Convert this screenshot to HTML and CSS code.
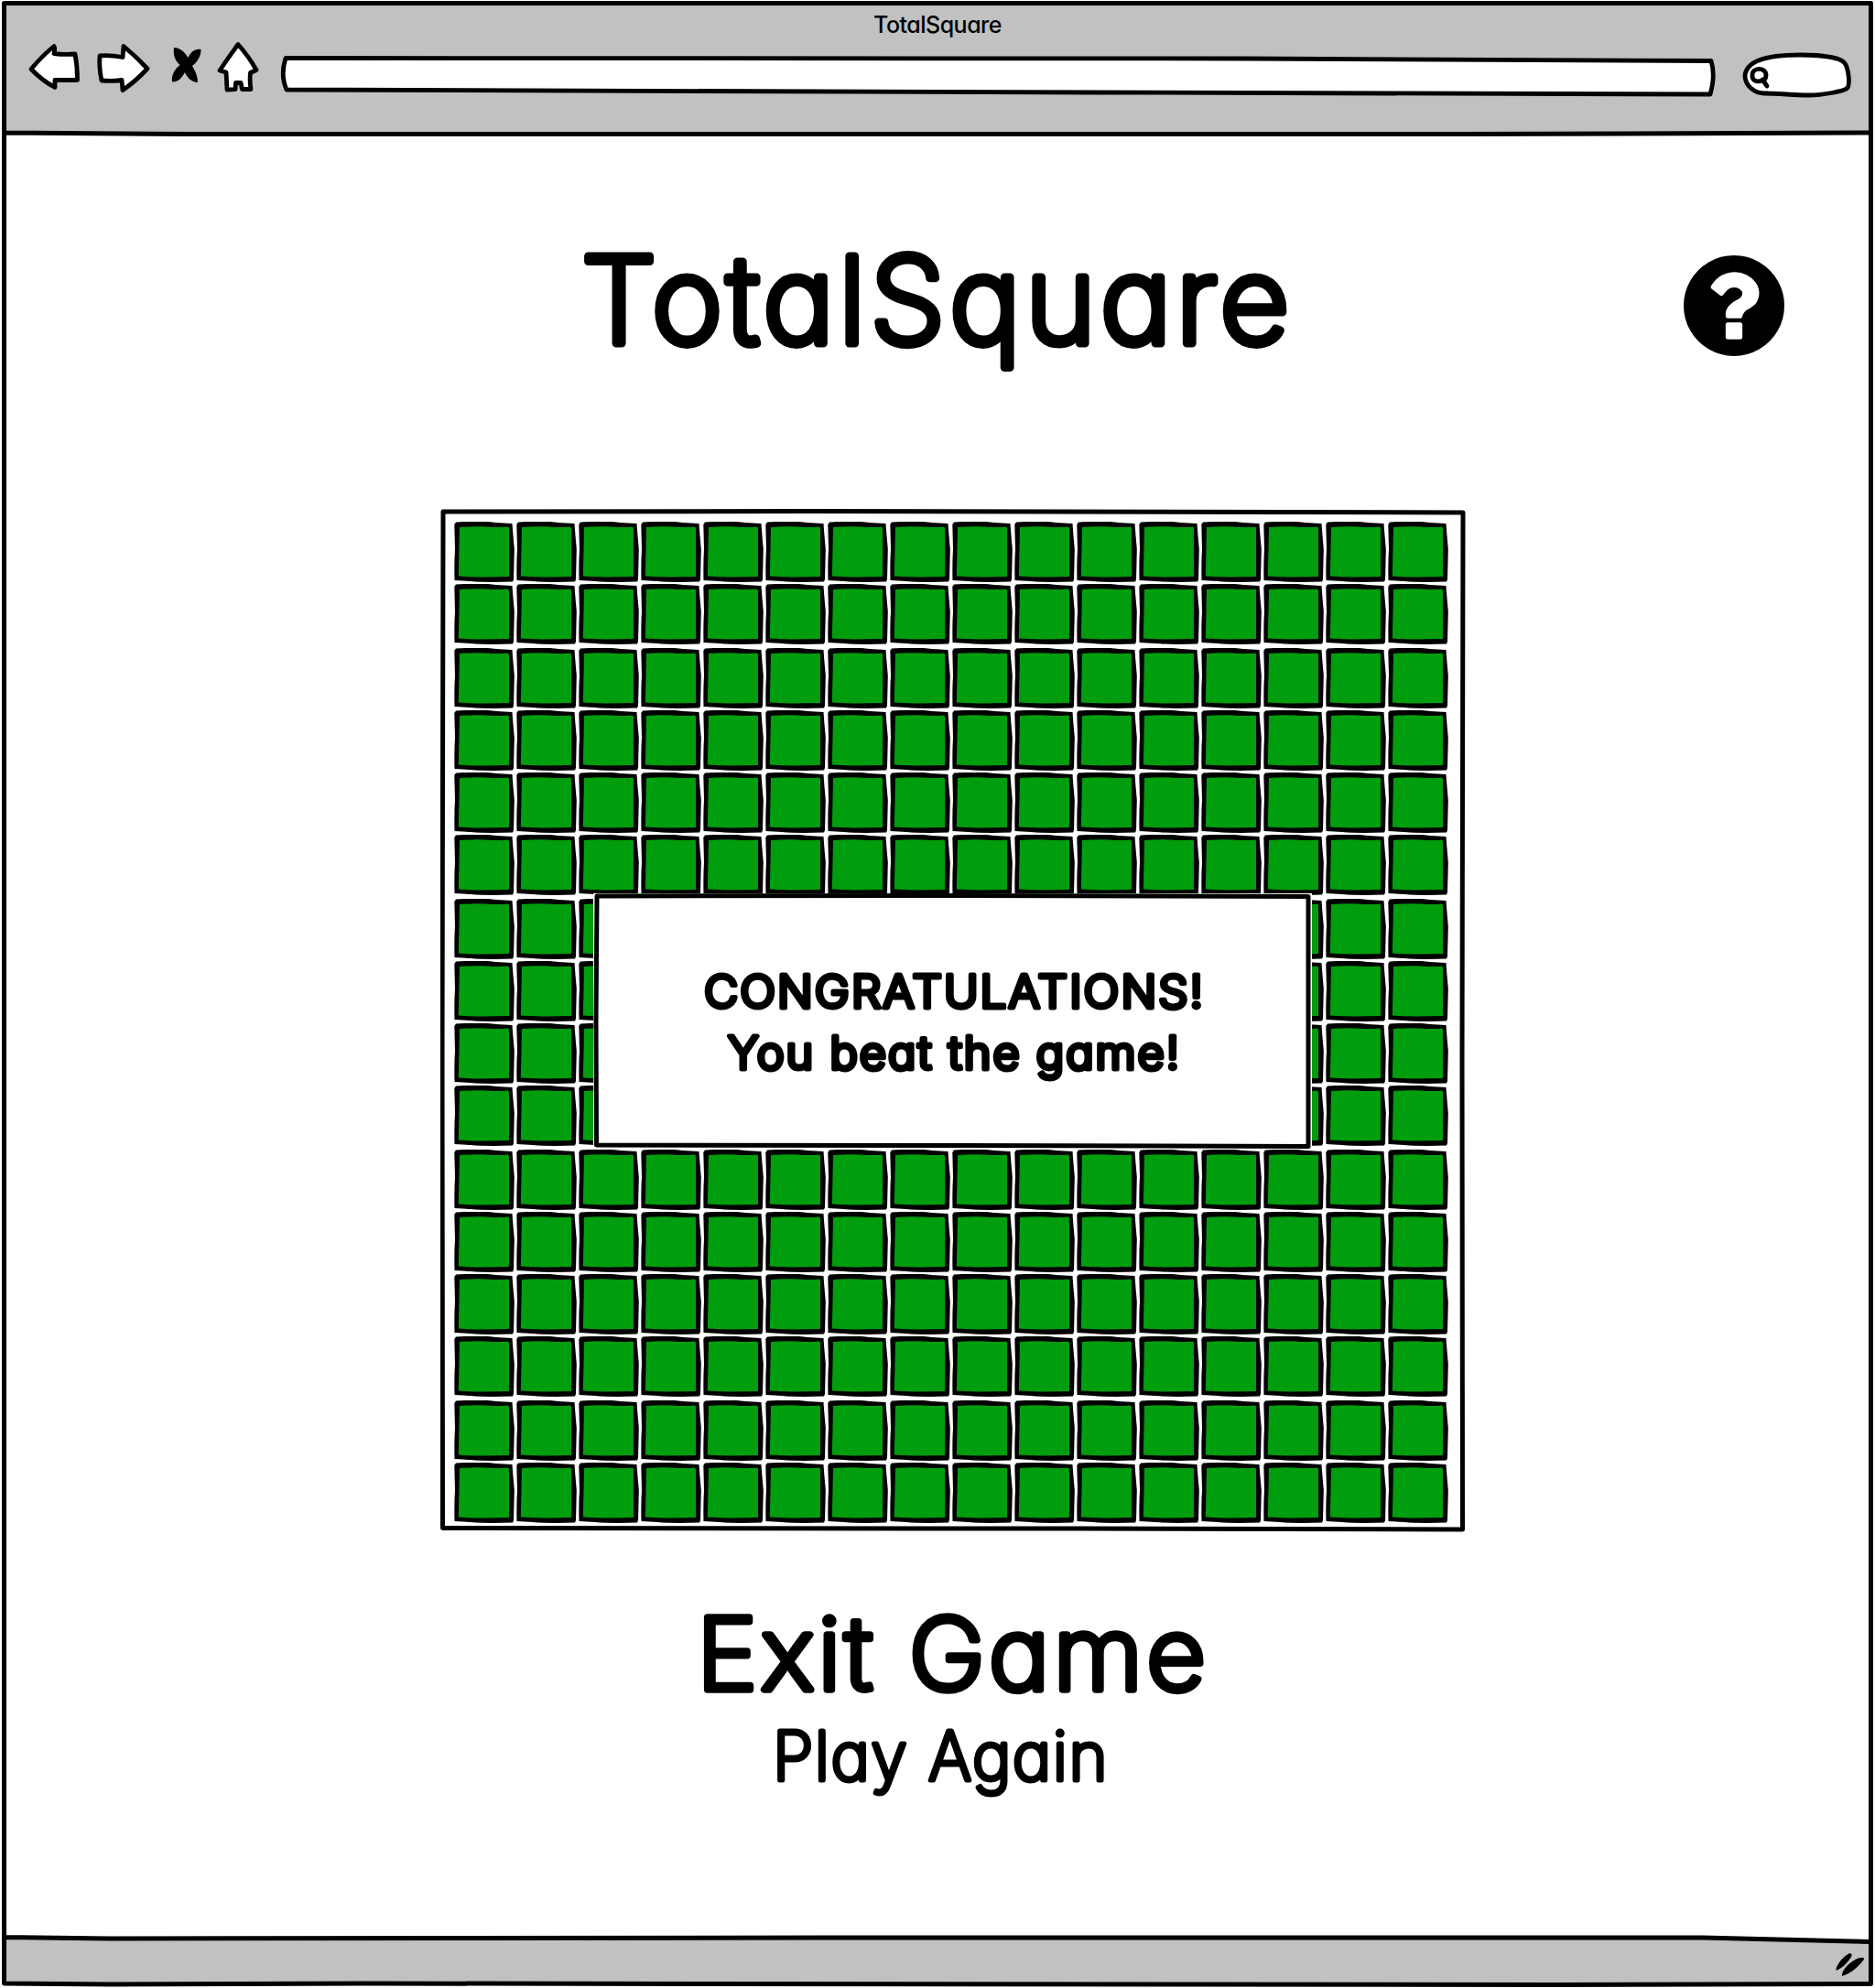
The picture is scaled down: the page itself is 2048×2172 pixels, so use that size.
FILE: index.html
```html
<!DOCTYPE html>
<html lang="en">
<head>
<meta charset="utf-8">
<title>TotalSquare</title>
<link rel="stylesheet" href="styles.css">
</head>
<body>
<div class="window">
  <header class="toolbar">
    <div class="window-title">TotalSquare</div>
    <nav class="controls">
      <svg class="ink icon-back" viewBox="28 44 62 60"><path d="M34 75.500 Q46 61 59 50.500 Q60.500 53 59 58.500 Q70 60 82 59 Q84.500 72 84.500 87.500 L60 87.500 L60 95.500 Q46 88 34 75.500Z"/></svg>
      <svg class="ink icon-forward" viewBox="102 44 66 60"><path d="M109 61 Q120 60 134 62.500 L135 50.500 Q149 62 161 75 Q148 89 134 98.500 L133 87.500 Q122 89 111 88 Q108 74 109 61Z"/></svg>
      <svg class="solid icon-stop" viewBox="184 48 40 46"><path d="M190 52 C198 52 203 59 205.500 63 C208 57 213 53 219.500 54 C219.500 62 215 68 210 72 C213 77 216 83 216 90 C209 90 204 84 202 79 C199 85 194 90 188 89.500 C187 82 191 75 196.500 71 C191 66 189 60 190 52Z"/></svg>
      <svg class="ink icon-home" viewBox="234 42 52 62"><path d="M260 48.500 Q272 62 280 76.500 L273.500 79.500 Q272.500 88 274 97.500 L264.500 97.500 L263 90.500 L257.500 90.500 L257 97.500 L248 98 L247 79 L240 77 Q250 62 260 48.500Z"/></svg>
      <svg class="ink address" viewBox="304 58 1572 50"><path d="M312 63.500 L1360 64 L1869 66.500 Q1874 82 1868 103 L1200 101 L313 98 Q306 82 312 63.500Z"/></svg>
      <svg class="ink search" viewBox="1900 54 126 56"><path d="M1930 102 C1915 103 1906 92 1906 83 C1907 66 1932 60 1966 60 C1990 60 2010 63 2015 69 C2019 75 2021 91 2018 96 C2014 100 1990 104 1976 104 C1958 104 1944 102 1926 102"/><path d="M1914 83 C1913 73 1929 73 1929 82 Q1929 87 1925 88 C1918 90 1914 88 1914 83 M1925 87 L1930 94"/></svg>
    </nav>
  </header>

  <main class="page">
    <div class="masthead">
      <h1 class="title"><svg class="lettering" width="790" height="160"><text x="5" y="127" textLength="778" lengthAdjust="spacingAndGlyphs">TotalSquare</text></svg></h1>
      <svg class="solid help" viewBox="0 128 1536 1536"><path d="M896 1376v-192q0-14-9-23t-23-9h-192q-14 0-23 9t-9 23v192q0 14 9 23t23 9h192q14 0 23-9t9-23zm256-672q0-88-55.500-163t-138.500-116-170-41q-243 0-371 213-15 24 8 42l132 100q7 6 19 6 16 0 25-12 53-68 86-92 34-24 86-24 48 0 85.500 26t37.500 59q0 38-20 61t-68 45q-63 28-115.500 86.500t-52.500 125.500v36q0 14 9 23t23 9h192q14 0 23-9t9-23q0-19 21.500-49.500t54.500-49.500q32-18 49-28.500t46-35 44.500-48 28-60.500 12.500-81zm384 192q0 209-103 385.500t-279.500 279.500-385.500 103-385.500-103-279.500-279.500-103-385.500 103-385.500 279.500-279.500 385.500-103 385.500 103 279.500 279.500 103 385.500z"/></svg>
    </div>

    <section class="board">
      <svg class="outline" viewBox="0 0 1120 1118"><path d="M3 3 L400 2.500 L1117 4 L1116 600 L1116.500 1115 L700 1114 L2.500 1113.500 L2 600Z"/></svg>
      <div class="tiles" id="tiles"></div>
      <div class="message">
        <svg class="outline" viewBox="0 0 785 279"><path d="M4 3 L400 2.500 L781 3.500 L781 276.500 L400 275.500 L3.500 275 L3 140Z"/></svg>
        <p><svg class="lettering" width="560" height="67"><text x="9" y="51.500" textLength="547" lengthAdjust="spacingAndGlyphs">CONGRATULATIONS!</text></svg></p>
        <p><svg class="lettering" width="560" height="67"><text x="35" y="51.500" textLength="495" lengthAdjust="spacingAndGlyphs">You beat the game!</text></svg></p>
      </div>
    </section>

    <a class="exit"><svg class="lettering" width="570" height="130"><text x="6" y="105" textLength="560" lengthAdjust="spacingAndGlyphs">Exit Game</text></svg></a>
    <a class="again"><svg class="lettering" width="380" height="100"><text x="6" y="73" textLength="367" lengthAdjust="spacingAndGlyphs">Play Again</text></svg></a>
  </main>

  <footer class="statusbar">
    <svg class="solid grip" viewBox="2002 2132 38 30"><path d="M2005.500 2153 C2005 2147 2014 2137 2020 2134 Q2024 2134 2022 2138 C2018 2145 2011 2151 2005.500 2153Z M2012 2159 C2011 2152 2024 2140 2032 2139 Q2038 2138 2035 2142 C2029 2150 2020 2157 2012 2159Z"/></svg>
  </footer>

  <svg class="frame" viewBox="0 0 2048 2172"><path class="corner" d="M1860 2116 L2041 2116 L2041 2120Z"/><path d="M4.500 3.500 L2043.500 3.500 L2043.500 1000 L2043.500 2167.500 L1700 2168.500 L400 2167 L260 2167.500 L120 2168 L4.500 2167 L4.500 1000Z M4 145 L200 146.500 L1600 146.500 L2043 145 M4 2116.500 L120 2118 L900 2117 L1860 2117 L2043 2121.500"/></svg>
</div>
<script src="script.js"></script>
</body>
</html>
```
FILE: styles.css
```css
* { box-sizing: border-box; }
body { margin: 0; background: #fff; color: #000; }

.window {
  position: relative;
  width: 2048px;
  height: 2172px;
  padding: 3px 4px 4px;
  display: flex;
  flex-direction: column;
  font-family: Inter, "Open Sans", sans-serif;
  font-feature-settings: "cv11";
}
svg { display: block; flex: none; }
.frame { position: absolute; inset: 0; width: 2048px; height: 2172px; pointer-events: none; }
.frame path, .outline path {
  fill: none;
  stroke: #000;
  stroke-width: 5;
  stroke-linejoin: round;
}
.frame .corner { fill: #fff; stroke: none; }

.ink {
  fill: #fff;
  stroke: #000;
  stroke-width: 4.8;
  stroke-linejoin: round;
  stroke-linecap: round;
}
.solid { fill: #000; }

/* marker-pen text: thin letters thickened by a round stroke */
.lettering { overflow: visible; }
.lettering text {
  fill: #000;
  stroke: #000;
  stroke-linejoin: round;
}

/* browser chrome */
.toolbar { height: 143px; background: #c1c1c1; }
.window-title {
  height: 39px;
  line-height: 48px;
  font-size: 25px;
  font-weight: 500;
  letter-spacing: -0.5px;
  text-align: center;
}
.controls { display: flex; padding-left: 24px; }
.icon-back { width: 62px; height: 60px; margin-top: 2px; }
.icon-forward { width: 66px; height: 60px; margin: 2px 0 0 12px; }
.icon-stop { width: 40px; height: 46px; margin: 6px 0 0 16px; }
.icon-home { width: 52px; height: 62px; margin-left: 10px; }
.address { width: 1572px; height: 50px; margin: 16px 0 0 18px; }
.search { width: 126px; height: 56px; margin: 12px 0 0 24px; }

/* page */
.page {
  height: 1972px;
  display: flex;
  flex-direction: column;
  align-items: center;
}
.masthead {
  align-self: stretch;
  display: flex;
  align-items: flex-start;
  padding-top: 102px;
  height: 262px;
}
.title {
  margin: 0 0 0 626px;
  font-size: 131px;
  font-weight: 200;
  letter-spacing: 5px;
  stroke-width: 9px;
}
.help { width: 110px; height: 110px; margin: 31px 0 0 419px; }

/* board */
.board {
  position: relative;
  width: 1120px;
  height: 1118px;
  margin: 148px 0 0 33px;
  padding: 14px 0 0 15px;
}
.outline { position: absolute; inset: 0; width: 100%; height: 100%; }
.tiles { display: grid; gap: 2px; }
.tile-group { display: grid; grid-template-columns: repeat(16, 68px); grid-auto-rows: 68px; }
.tile { width: 66px; height: 66px; }
.tile-edge { fill: #000; }
.tile-face { fill: #009d0e; }

.message {
  position: absolute;
  left: 167px;
  top: 420px;
  width: 785px;
  height: 279px;
  padding: 73px 0 0 112.5px;
  background: #fff;
}
.message p {
  margin: 0;
  font-size: 49.5px;
  font-weight: 300;
  letter-spacing: 2px;
  stroke-width: 5px;
}

.exit { margin: 67px 0 0 32px; font-size: 109px; font-weight: 200; letter-spacing: 4px; stroke-width: 7.5px; }
.again { margin: 1px 0 0 7px; font-size: 73.5px; font-weight: 200; letter-spacing: 1.5px; stroke-width: 5px; }

.statusbar {
  height: 50px;
  display: flex;
  justify-content: flex-end;
  padding: 14px 4px 0 0;
  background: #c1c1c1;
}
.grip { width: 38px; height: 30px; }
```
FILE: script.js
```js
// The board is filled in bands of rows, with a slightly wider gap between bands.
const bands = [2, 4, 4, 4, 2];
const tile =
  '<svg class="tile" viewBox="0 0 66 66">' +
  '<path class="tile-edge" d="M2 .6 Q30 -1.500 46 1 L63.500 2 Q64 10 65.800 30 Q65.500 45 65 63 L64 65.500 Q35 66.500 18 65 L.5 64 Q0 45 1 30 Q.6 14 .3 3Z"/>' +
  '<path class="tile-face" d="M6 6 Q20 5 35 5.500 Q48 6.500 59 5.500 L60 7 L60 60 L30 60.500 Q12 60 4.800 59.500 L5.500 30Z"/></svg>';

document.getElementById('tiles').innerHTML = bands
  .map(rows => '<div class="tile-group">' + tile.repeat(rows * 16) + '</div>')
  .join('');
```
